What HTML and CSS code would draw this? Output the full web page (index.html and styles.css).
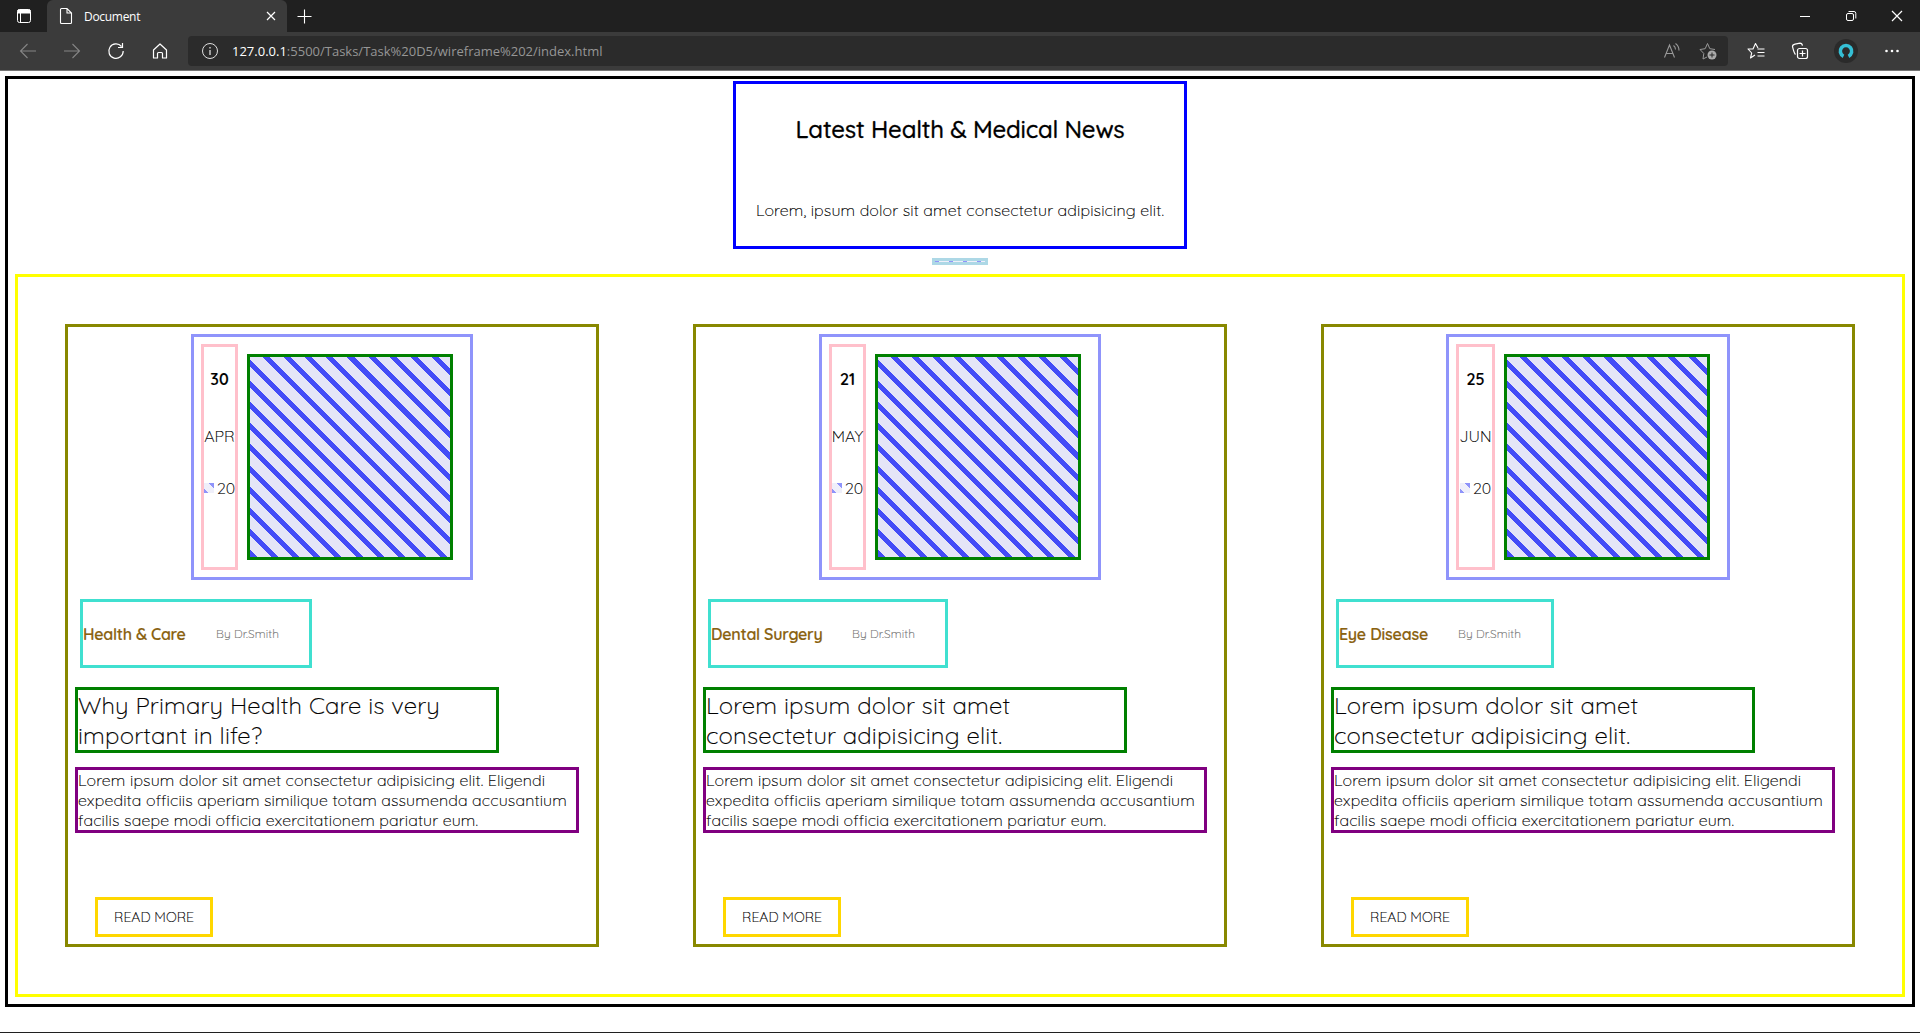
FILE: index.html
```html
<!DOCTYPE html>
<html lang="en">
<head>
<meta charset="utf-8">
<title>Document</title>
<link rel="stylesheet" href="styles.css">
</head>
<body>
<header class="browser">
  <div class="tabbar">
    <div class="tab-actions"><svg width="16" height="16" viewBox="0 0 16 16" fill="none" stroke="#fff"><rect x="1.500" y="1.500" width="13" height="13" rx="2"/><path d="M2 2h12v3H2z" fill="#fff"/><path d="M4.500 5v9"/></svg></div>
    <div class="tab">
      <svg width="14" height="18" viewBox="0 0 14 18" fill="none" stroke="#fff" stroke-width="1.1"><path d="M2.5 1.5H8L12.500 6v9.500a1 1 0 0 1-1 1h-9a1 1 0 0 1-1-1v-13a1 1 0 0 1 1-1zM8 1.500V6h4.500"/></svg>
      <span class="tab-title">Document</span>
      <svg width="10" height="10" viewBox="0 0 10 10" stroke="#fff" stroke-width="1.2"><path d="M1 1l8 8M9 1L1 9"/></svg>
    </div>
    <svg class="new-tab" width="15" height="15" viewBox="0 0 15 15" stroke="#fff" stroke-width="1.1"><path d="M7.500 .5v14M.5 7.500h14"/></svg>
    <div class="window-buttons">
      <svg width="12" height="12" viewBox="0 0 12 12" stroke="#fff"><path d="M1 6.500h10"/></svg>
      <svg width="12" height="12" viewBox="0 0 12 12" fill="none" stroke="#fff"><rect x="1.500" y="3.500" width="7" height="7" rx="1.500"/><path d="M3.500 1.500H9A1.800 1.800 0 0 1 10.800 3.300V8.500"/></svg>
      <svg width="12" height="12" viewBox="0 0 12 12" stroke="#fff" stroke-width="1.2"><path d="M1 1l10 10M11 1L1 11"/></svg>
    </div>
  </div>
  <div class="toolbar">
    <div class="nav">
      <svg width="18" height="18" viewBox="0 0 18 18" fill="none" stroke="#858585" stroke-width="1.100"><path d="M17 9H1.500M8.500 2L1.500 9l7 7"/></svg>
      <svg width="18" height="18" viewBox="0 0 18 18" fill="none" stroke="#858585" stroke-width="1.100"><path d="M1 9h15.500M9.500 2l7 7-7 7"/></svg>
      <svg width="18" height="18" viewBox="0 0 18 18" fill="none" stroke="#fff" stroke-width="1.200"><path d="M14.500 4.500A7.200 7.200 0 1 0 16.200 9M15.500 1v4.500H11"/></svg>
      <svg width="18" height="18" viewBox="0 0 18 18" fill="none" stroke="#fff" stroke-width="1.200"><path d="M2.500 8L9 2l6.500 6v8h-4v-4.500a1 1 0 0 0-1-1h-3a1 1 0 0 0-1 1V16h-4z" stroke-linejoin="round"/></svg>
    </div>
    <div class="address">
      <svg width="18" height="18" viewBox="0 0 18 18" fill="none" stroke="#ddd"><circle cx="9" cy="9" r="7.500"/><path d="M9 8v5M9 5v1.500" stroke-width="1.300"/></svg>
      <span class="url"><b>127.0.0.1</b>:5500/Tasks/Task%20D5/wireframe%202/index.html</span>
      <svg width="18" height="18" viewBox="0 0 18 18" fill="none" stroke="#999" stroke-width="1.100"><path d="M1.500 15.500L6.500 3l5 12.500M3.200 11.500h6.600M10.500 3.500q2 1.500 2 4M12.500 1.500q3.500 2.500 3.500 7"/></svg>
      <svg class="fav" width="19" height="18" viewBox="0 0 19 18" fill="none" stroke="#999"><path d="M8 15l-4 2 .8-5.500L1 7.500l5.200-.8L8.500 1.500l2.300 5.200 5.200.8" stroke-linejoin="round"/><circle cx="13" cy="13" r="4.500" fill="#aaa" stroke="none"/><path d="M13 10.500v5M10.500 13h5" stroke="#2b2b2b"/></svg>
    </div>
    <div class="tools">
      <svg width="18" height="18" viewBox="0 0 18 18" fill="none" stroke="#fff" stroke-width="1.100"><path d="M8 13l-4.500 3L4.700 11 1 7h5L8.500 1.500 11 6M10.500 7h7M10.500 10.500h7M10.500 14h7" stroke-linejoin="round"/></svg>
      <svg width="18" height="18" viewBox="0 0 18 18" fill="none" stroke="#fff" stroke-width="1.200"><rect x="6.500" y="6.500" width="10" height="10" rx="2"/><path d="M11.500 8.500v6M8.500 11.500h6M4.500 12.500C3 11 2 6.500 1.500 4.500 1.500 3 2.500 2.500 4 2.200L9 1.200q2 0 2.500 2.500"/></svg>
      <svg width="24" height="24" viewBox="0 0 24 24"><circle cx="12" cy="12" r="12" fill="#2a2a2a"/><path d="M9.500 17.300A5.700 5.700 0 1 1 14.500 17.300" fill="none" stroke="#35bfd5" stroke-width="3.600"/></svg>
      <svg width="16" height="6" viewBox="0 0 16 6" fill="#fff"><circle cx="2.500" cy="3" r="1.300"/><circle cx="8" cy="3" r="1.300"/><circle cx="13.500" cy="3" r="1.300"/></svg>
    </div>
  </div>
</header>
<main class="page">
  <section class="intro">
    <h1>Latest Health &amp; Medical News</h1>
    <p>Lorem, ipsum dolor sit amet consectetur adipisicing elit.</p>
  </section>
  <div class="divider"><i class="hatch-small"></i></div>
  <section class="cards">
    <article class="card">
      <div class="media">
        <div class="date"><b>30</b><span>APR</span><span class="year"><i class="hatch-small"></i>20</span></div>
        <div class="picture"></div>
      </div>
      <div class="meta"><b>Health &amp; Care</b><small>By Dr.Smith</small></div>
      <h2>Why Primary Health Care is very<br>important in life?</h2>
      <p class="text">Lorem ipsum dolor sit amet consectetur adipisicing elit. Eligendi<br>expedita officiis aperiam similique totam assumenda accusantium<br>facilis saepe modi officia exercitationem pariatur eum.</p>
      <a class="more">READ MORE</a>
    </article>
    <article class="card">
      <div class="media">
        <div class="date"><b>21</b><span>MAY</span><span class="year"><i class="hatch-small"></i>20</span></div>
        <div class="picture"></div>
      </div>
      <div class="meta dental"><b>Dental Surgery</b><small>By Dr.Smith</small></div>
      <h2>Lorem ipsum dolor sit amet<br>consectetur adipisicing elit.</h2>
      <p class="text">Lorem ipsum dolor sit amet consectetur adipisicing elit. Eligendi<br>expedita officiis aperiam similique totam assumenda accusantium<br>facilis saepe modi officia exercitationem pariatur eum.</p>
      <a class="more">READ MORE</a>
    </article>
    <article class="card">
      <div class="media wide">
        <div class="date"><b>25</b><span>JUN</span><span class="year"><i class="hatch-small"></i>20</span></div>
        <div class="picture"></div>
      </div>
      <div class="meta eye"><b>Eye Disease</b><small>By Dr.Smith</small></div>
      <h2>Lorem ipsum dolor sit amet<br>consectetur adipisicing elit.</h2>
      <p class="text">Lorem ipsum dolor sit amet consectetur adipisicing elit. Eligendi<br>expedita officiis aperiam similique totam assumenda accusantium<br>facilis saepe modi officia exercitationem pariatur eum.</p>
      <a class="more">READ MORE</a>
    </article>
  </section>
</main>
</body>
</html>
```

FILE: styles.css
```css
* { box-sizing: border-box; }
body { margin: 0; height: 1033px; overflow: hidden; background: #fff; border-bottom: 1px solid #202020; font-family: Quicksand, Lato, sans-serif; font-weight: 300; color: #000; }
svg { display: block; flex: none; }
h1, h2, p { margin: 0; font-weight: inherit; }

.browser { height: 71px; border-bottom: 1px solid #767676; font: 12px "Segoe UI", "Open Sans", sans-serif; color: #fff; }
.tabbar { display: flex; align-items: center; height: 32px; background: #202020; }
.tab-actions { width: 47px; padding-left: 16px; }
.tab { display: flex; align-items: center; width: 240px; height: 32px; padding: 0 11px 0 12px; background: #3b3b3b; border-radius: 6px 6px 0 0; }
.tab-title { flex: 1; margin-left: 11px; letter-spacing: -.3px; }
.new-tab { margin-left: 10px; }
.window-buttons { display: flex; gap: 34px; margin-left: auto; padding-right: 17px; }
.toolbar { display: flex; align-items: center; height: 38px; background: #3b3b3b; }
.nav { display: flex; gap: 26px; width: 188px; padding-left: 19px; }
.address { display: flex; align-items: center; width: 1540px; height: 30px; padding: 0 10px 0 13px; background: #2b2b2b; border-radius: 4px; }
.url { flex: 1; margin-left: 13px; font-size: 13px; color: #969696; }
.url b { font-weight: 400; color: #fff; }
.fav { margin-left: 18px; }
.tools { display: flex; align-items: center; flex: 1; gap: 25.5px; padding-left: 19px; }

.page { margin: 5px 5px 0; height: 931px; padding: 2px 7px 7px; border: 3px solid #000; -webkit-text-stroke: .15px; }
.intro { width: 454px; height: 168px; margin: 0 auto; border: 3px solid #00f; text-align: center; white-space: nowrap; }
.intro h1 { margin-top: 30px; font-size: 24px; line-height: 30px; font-weight: 500; letter-spacing: -.2px; -webkit-text-stroke: .3px; }
.intro p { margin-top: 56px; font-size: 16px; line-height: 20px; letter-spacing: .13px; }
.divider { width: 56px; height: 7px; margin: 9px auto; border: 3px solid lightblue; }
.divider .hatch-small { display: block; height: 1px; }
.hatch-small { opacity: .6; background: repeating-linear-gradient(45deg, #444cf7 0, #444cf7 3px, #e5e5f7 3px, #e5e5f7 10px); }

.cards { display: flex; gap: 94px; height: 723px; padding: 47px; border: 3px solid yellow; }
.card { width: 534px; height: 623px; padding: 7px; border: 3px solid #880; }
.media { display: flex; width: 282px; height: 246px; margin: 0 auto; padding: 7px; border: 3px solid #8f94fb; }
.media.wide { width: 284px; }
.date { width: 37px; height: 226px; border: 3px solid pink; display: flex; flex-direction: column; align-items: center; padding-top: 22px; font-size: 16px; line-height: 20px; }
.wide .date { width: 39px; }
.date b { font-weight: 600; }
.date span { margin-top: 37px; }
.date .year { display: flex; align-items: center; gap: 3px; margin-top: 32px; }
.year .hatch-small { width: 10px; height: 10px; background: linear-gradient(45deg, #444cf7 3px, #e5e5f7 3px, #e5e5f7 10.6px, #444cf7 10.6px); }
.picture { width: 206px; height: 206px; margin: 10px 0 0 9px; border: 3px solid green; background: repeating-linear-gradient(45deg, #444cf7 0, #444cf7 5px, #e5e5f7 5px, #e5e5f7 15px) padding-box; }
.meta { display: flex; align-items: center; width: 232px; height: 69px; margin: 19px 0 0 5px; border: 3px solid turquoise; justify-content: space-between; padding-right: 30px; white-space: nowrap; }
.meta.dental { width: 240px; }
.meta.eye { width: 218px; }
.meta b { font-size: 16px; font-weight: 600; color: #8a6210; letter-spacing: -.27px; }
.meta.eye b { letter-spacing: -.18px; }
.meta small { font-size: 12px; color: #707070; letter-spacing: .08px; }
.card h2 { width: 424px; height: 66px; margin-top: 19px; border: 3px solid green; font-size: 24px; line-height: 30px; letter-spacing: .18px; white-space: nowrap; -webkit-text-stroke: .2px; }
.text { width: 504px; height: 66px; margin-top: 14px; border: 3px solid purple; font-size: 16px; line-height: 20px; letter-spacing: .13px; white-space: nowrap; }
.more { display: flex; align-items: center; justify-content: center; width: 118px; height: 40px; margin: 64px 0 0 20px; border: 3px solid gold; font-size: 14px; }
```
